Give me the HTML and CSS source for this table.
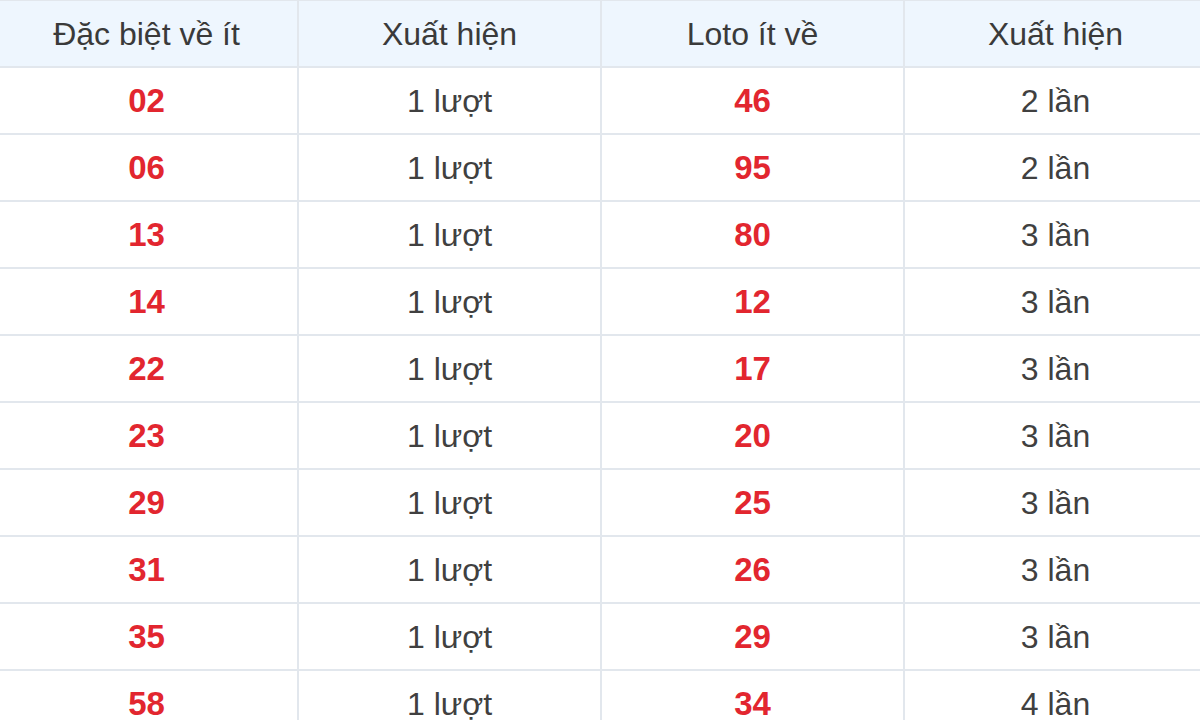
FILE: index.html
```html
<!DOCTYPE html>
<html lang="vi">
<head>
<meta charset="utf-8">
<title>Thống kê</title>
<link rel="stylesheet" href="styles.css">
</head>
<body>
<table class="stats">
  <thead>
    <tr>
      <th>Đặc biệt về ít</th>
      <th>Xuất hiện</th>
      <th>Loto ít về</th>
      <th>Xuất hiện</th>
    </tr>
  </thead>
  <tbody>
    <tr><td class="num">02</td><td>1 lượt</td><td class="num">46</td><td>2 lần</td></tr>
    <tr><td class="num">06</td><td>1 lượt</td><td class="num">95</td><td>2 lần</td></tr>
    <tr><td class="num">13</td><td>1 lượt</td><td class="num">80</td><td>3 lần</td></tr>
    <tr><td class="num">14</td><td>1 lượt</td><td class="num">12</td><td>3 lần</td></tr>
    <tr><td class="num">22</td><td>1 lượt</td><td class="num">17</td><td>3 lần</td></tr>
    <tr><td class="num">23</td><td>1 lượt</td><td class="num">20</td><td>3 lần</td></tr>
    <tr><td class="num">29</td><td>1 lượt</td><td class="num">25</td><td>3 lần</td></tr>
    <tr><td class="num">31</td><td>1 lượt</td><td class="num">26</td><td>3 lần</td></tr>
    <tr><td class="num">35</td><td>1 lượt</td><td class="num">29</td><td>3 lần</td></tr>
    <tr><td class="num">58</td><td>1 lượt</td><td class="num">34</td><td>4 lần</td></tr>
  </tbody>
</table>
</body>
</html>
```
FILE: styles.css
```css
html, body {
  margin: 0;
  padding: 0;
  background: #ffffff;
  overflow: hidden;
}
body {
  font-family: "Liberation Sans", Arial, sans-serif;
  color: #333333;
}
.stats {
  border-collapse: collapse;
  table-layout: fixed;
  width: 1212px;
  margin-left: -6px;
  margin-top: -1px;
}
.stats th,
.stats td {
  width: 301px;
  height: 65px;
  padding: 0;
  text-align: center;
  vertical-align: middle;
  border: 2px solid #e2e7ed;
  line-height: 1;
}
.stats th {
  background: #eef6fe;
  font-weight: normal;
  font-size: 32px;
  color: #3a3a3a;
}
.stats td {
  font-size: 32px;
  color: #404040;
}
.stats td.num {
  font-size: 33px;
  font-weight: bold;
  color: #e2262f;
}
```
